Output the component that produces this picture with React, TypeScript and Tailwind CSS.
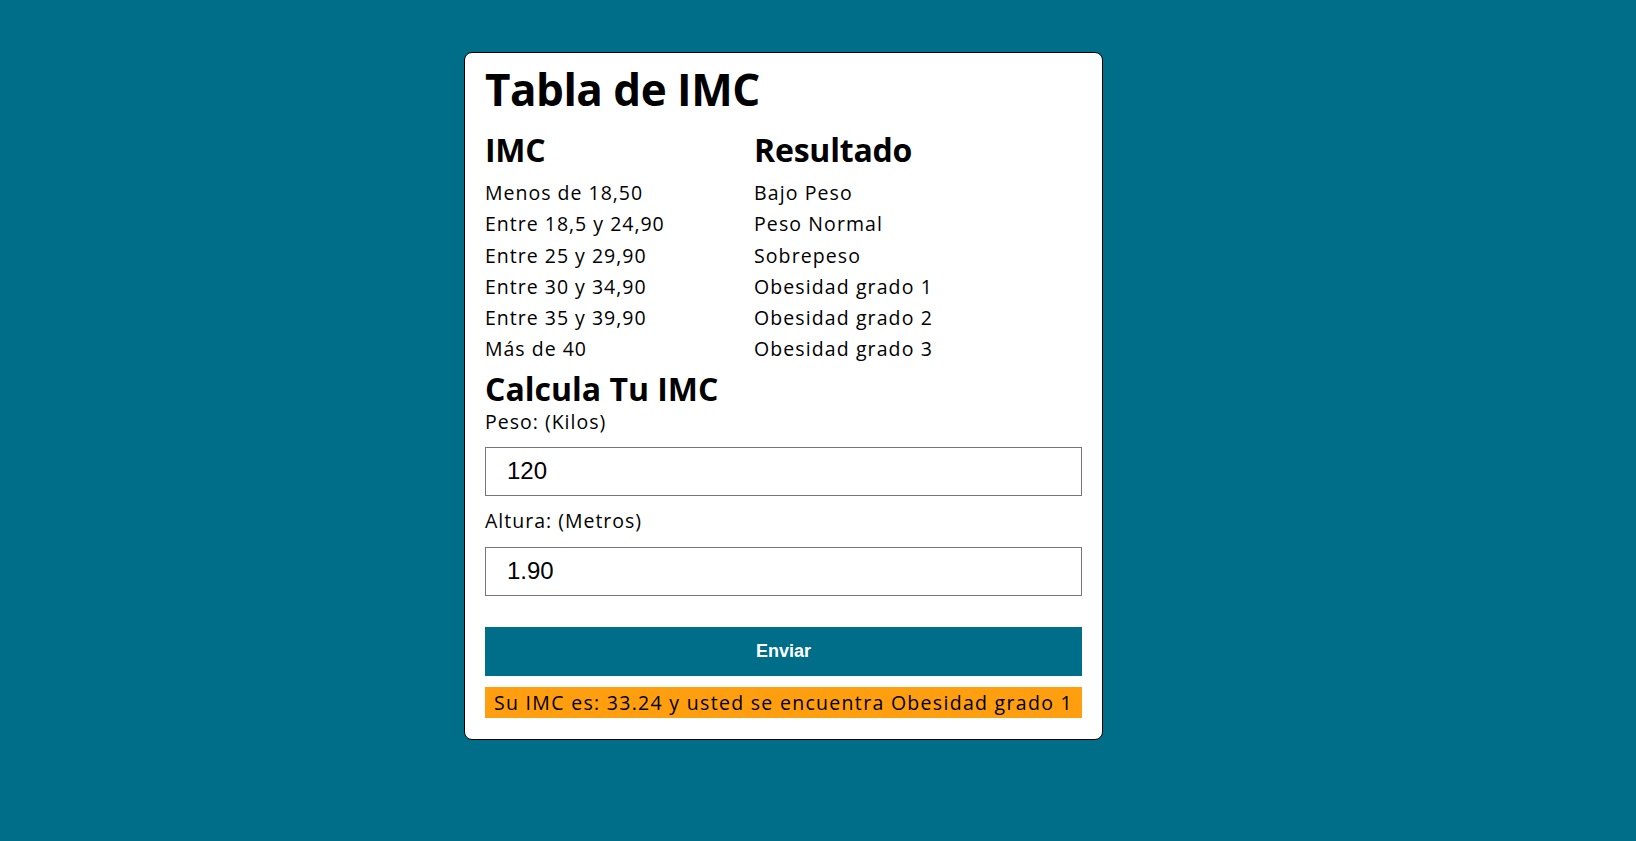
import React from "react";

const rows: [string, string][] = [
  ["Menos de 18,50", "Bajo Peso"],
  ["Entre 18,5 y 24,90", "Peso Normal"],
  ["Entre 25 y 29,90", "Sobrepeso"],
  ["Entre 30 y 34,90", "Obesidad grado 1"],
  ["Entre 35 y 39,90", "Obesidad grado 2"],
  ["Más de 40", "Obesidad grado 3"],
];

export default function App() {
  return (
    <div className="min-h-screen bg-[#006e89] pt-[52px] pb-[60px] font-['Open_Sans',sans-serif] text-black">
      <div className="ml-[464px] w-[639px] rounded-lg border border-black bg-white px-5 pt-[12px] pb-[21px]">
        <h1 className="text-[44px] font-bold leading-[48px] tracking-[-0.5px]">Tabla de IMC</h1>
        <div className="mt-[19px] flex">
          <div className="w-[269px]">
            <h2 className="text-[32px] font-bold leading-[36px] tracking-[-0.3px]">IMC</h2>
            <ul className="mt-[9px] text-[19.5px] leading-[31.3px] tracking-[1px]">
              {rows.map((r) => (
                <li key={r[0]}>{r[0]}</li>
              ))}
            </ul>
          </div>
          <div className="flex-1">
            <h2 className="text-[32px] font-bold leading-[36px] tracking-[-0.2px]">Resultado</h2>
            <ul className="mt-[9px] text-[19.5px] leading-[31.3px] tracking-[1.1px]">
              {rows.map((r) => (
                <li key={r[1]}>{r[1]}</li>
              ))}
            </ul>
          </div>
        </div>
        <h2 className="mt-[8px] text-[32px] font-bold leading-[32px]">Calcula Tu IMC</h2>
        <form className="flex flex-col" onSubmit={(e) => e.preventDefault()}>
          <label className="mt-[5px] text-[19.5px] leading-[24px] tracking-[1px]">Peso: (Kilos)</label>
          <input
            defaultValue="120"
            className="mt-[13px] h-[49px] w-full border border-[#767676] px-[21px] font-['Liberation_Sans',Arial,sans-serif] text-[24px] text-black outline-none"
          />
          <label className="mt-[13px] text-[19.5px] leading-[24px] tracking-[1px]">Altura: (Metros)</label>
          <input
            defaultValue="1.90"
            className="mt-[14px] h-[49px] w-full border border-[#767676] px-[21px] font-['Liberation_Sans',Arial,sans-serif] text-[24px] text-black outline-none"
          />
          <button
            type="submit"
            className="mt-[31px] h-[49px] w-full bg-[#006e89] font-['Liberation_Sans',Arial,sans-serif] text-[18px] font-bold text-white"
          >
            Enviar
          </button>
          <div className="mt-[11px] h-[31px] bg-[#ff9f10] text-center text-[19.5px] leading-[31px] tracking-[1.3px] whitespace-nowrap">
            Su IMC es: 33.24 y usted se encuentra Obesidad grado 1
          </div>
        </form>
      </div>
    </div>
  );
}
